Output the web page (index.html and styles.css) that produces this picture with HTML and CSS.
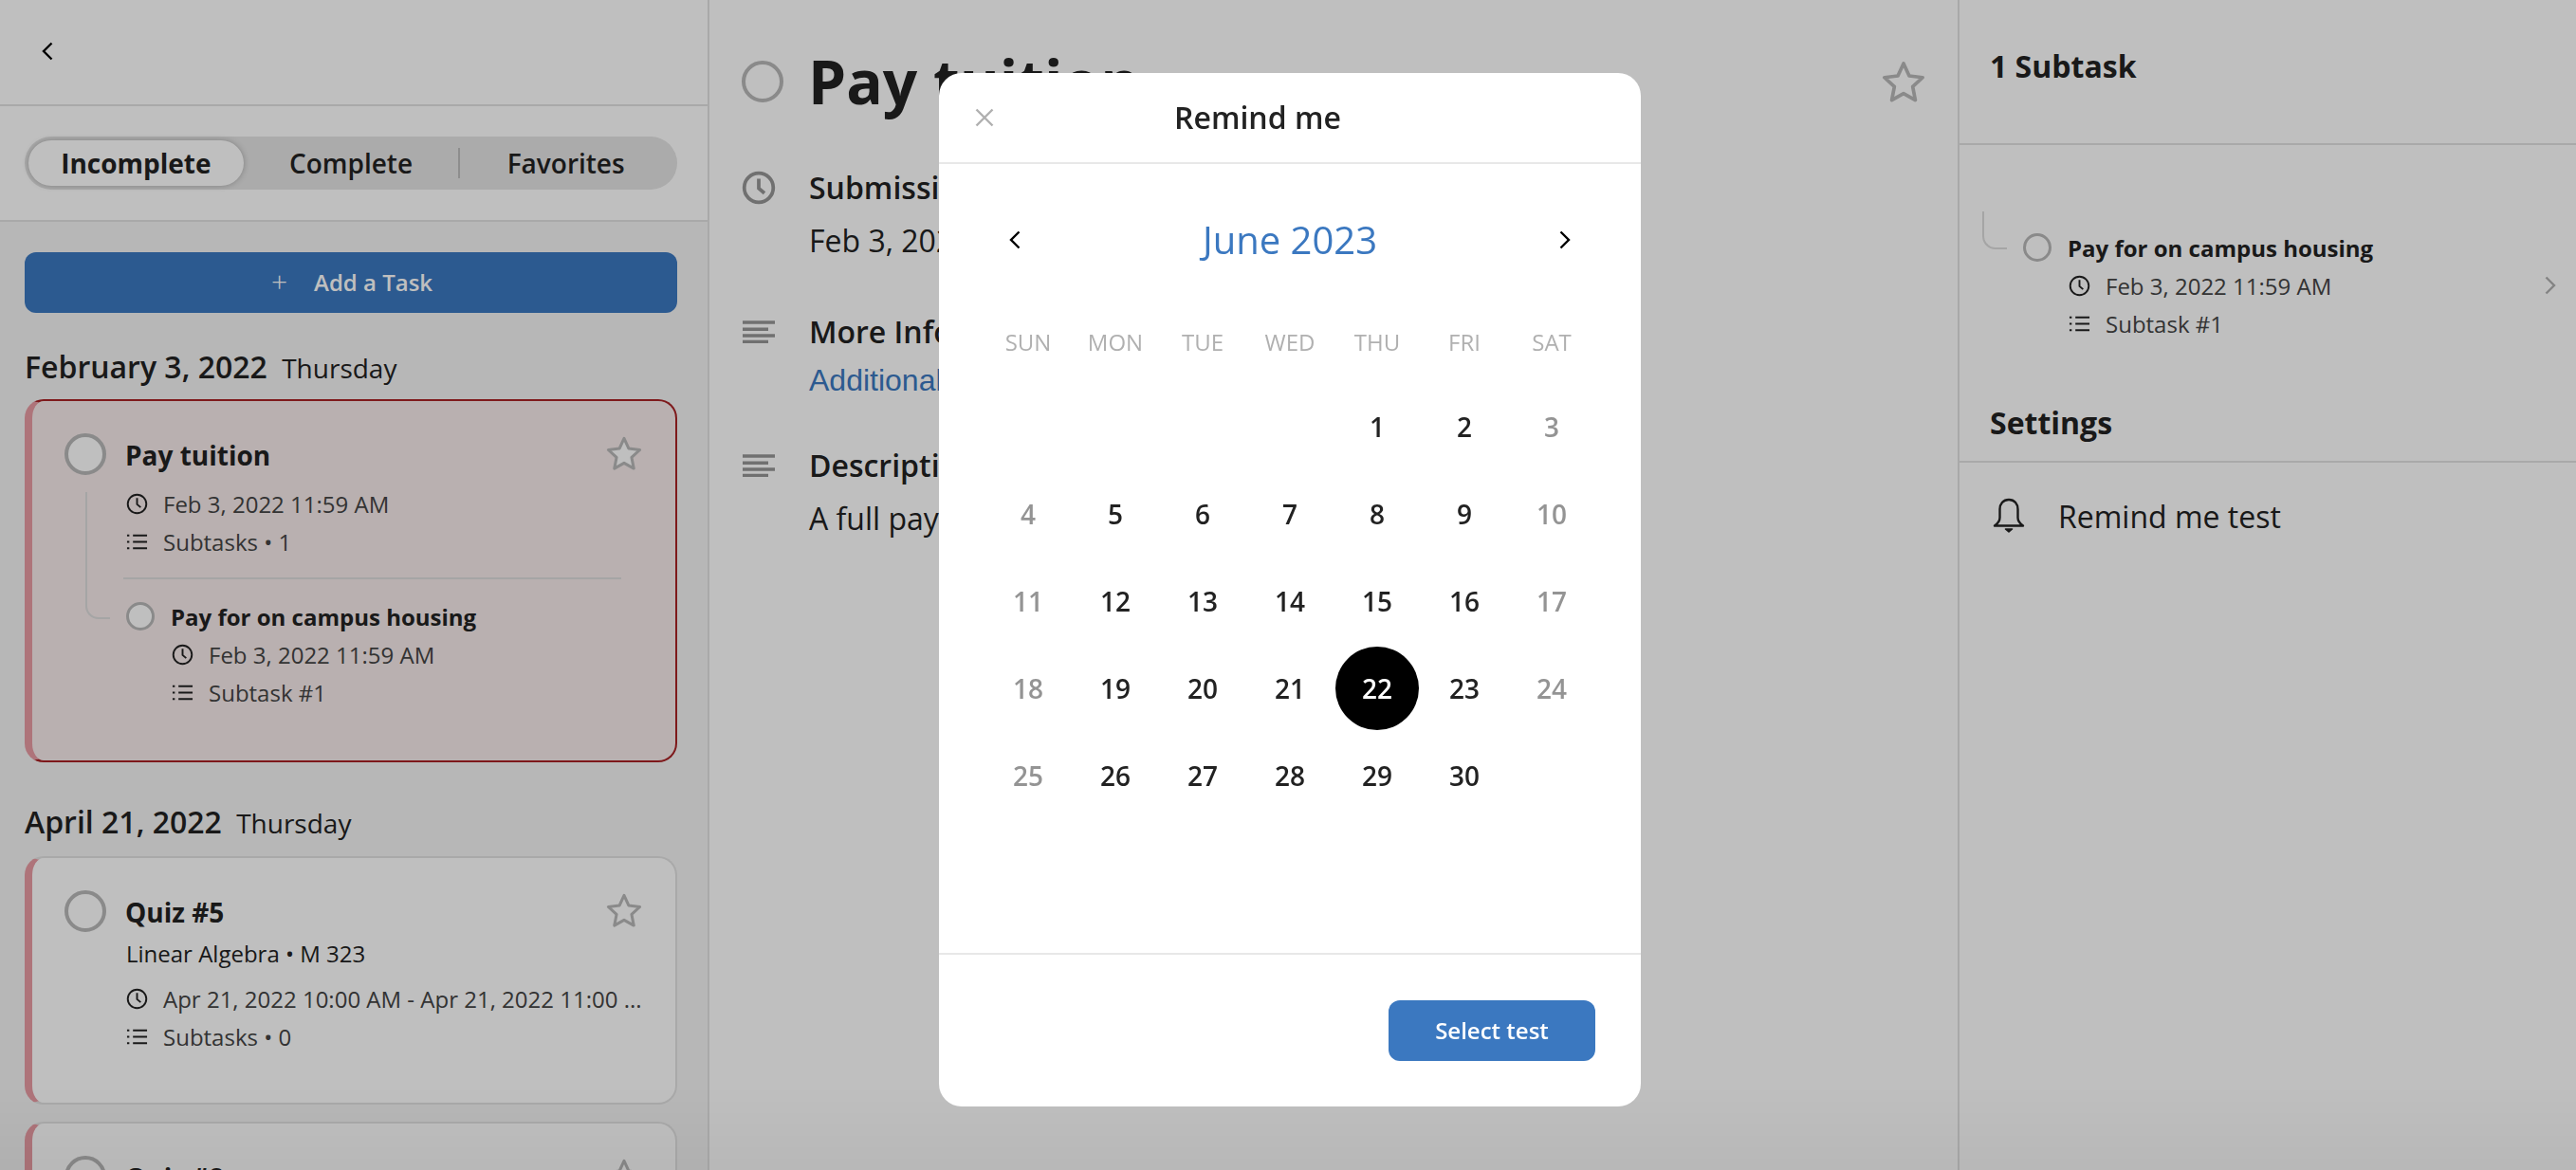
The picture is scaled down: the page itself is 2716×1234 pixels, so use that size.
FILE: index.html
```html
<!DOCTYPE html>
<html lang="en">
<head>
    <meta charset="UTF-8">
    <title>Remind me</title>
    <link rel="stylesheet" href="styles.css">
</head>
<body>
    <svg class="sprite" xmlns="http://www.w3.org/2000/svg">
        <symbol id="i-star" viewBox="0 0 40 38"><path d="M20 2.500l5.200 11.300 12.300 1.500-9.100 8.400 2.400 12.300L20 29.900 9.200 36l2.400-12.300-9.100-8.400 12.300-1.500z" stroke-linejoin="round"/></symbol>
        <symbol id="i-clock" viewBox="0 0 24 24"><circle cx="12" cy="12" r="10.200" fill="none"/><path d="M12 5.600V12.400l4 3.400" fill="none"/></symbol>
        <symbol id="i-list" viewBox="0 0 24 24"><path d="M7.500 5H23M7.500 12H23M7.500 19H23" fill="none"/><path d="M1 5h2.500M1 12h2.500M1 19h2.500" fill="none"/></symbol>
        <symbol id="i-lines" viewBox="0 0 34 24"><path d="M0 2h34M0 9.300h27M0 16h34M0 22.500h27" fill="none"/></symbol>
        <symbol id="i-bell" viewBox="0 0 34 38"><path d="M17 2c-6.200 0-9.500 4.700-9.500 10v9c0 3.500-2 6-5.500 8.500h30c-3.500-2.500-5.500-5-5.500-8.500v-9C26.500 6.700 23.200 2 17 2z" fill="none" stroke-width="2.400" stroke-linejoin="round"/><path d="M13.500 33l3.500 3 3.500-3z" stroke-width="1.600" stroke-linejoin="round"/></symbol>
    </svg>

    <div class="app">
        <aside class="sidebar">
            <div class="sidebar-top">
                <svg class="chevron chevron-back" viewBox="0 0 12 20"><path d="M10.500 1.500L2 10l8.500 8.500"/></svg>
            </div>
            <div class="filter-bar">
                <div class="segments">
                    <div class="segment segment-active">Incomplete</div>
                    <div class="segment">Complete</div>
                    <div class="segment segment-last">Favorites</div>
                </div>
            </div>
            <div class="task-list">
                <button class="add-task" type="button"><span class="add-plus">+</span>Add a Task</button>

                <section class="day-group">
                    <h2 class="day-title">February 3, 2022 <span class="day-name">Thursday</span></h2>
                    <article class="card card-active">
                        <div class="card-head">
                            <span class="check"></span>
                            <h3 class="card-title">Pay tuition</h3>
                            <svg class="star star-filled"><use href="#i-star"/></svg>
                        </div>
                        <div class="card-body">
                            <div class="meta"><svg class="meta-icon"><use href="#i-clock"/></svg><span class="meta-text">Feb 3, 2022 11:59 AM</span></div>
                            <div class="meta"><svg class="meta-icon"><use href="#i-list"/></svg><span class="meta-text">Subtasks • 1</span></div>
                        </div>
                        <div class="card-split"></div>
                        <div class="subtask subtask-card">
                            <div class="subtask-head"><span class="check check-small"></span><h4 class="subtask-title">Pay for on campus housing</h4></div>
                            <div class="subtask-body">
                                <div class="meta"><svg class="meta-icon"><use href="#i-clock"/></svg><span class="meta-text">Feb 3, 2022 11:59 AM</span></div>
                                <div class="meta"><svg class="meta-icon"><use href="#i-list"/></svg><span class="meta-text">Subtask #1</span></div>
                            </div>
                        </div>
                    </article>
                </section>

                <section class="day-group">
                    <h2 class="day-title">April 21, 2022 <span class="day-name">Thursday</span></h2>
                    <article class="card">
                        <div class="card-head">
                            <span class="check"></span>
                            <h3 class="card-title">Quiz #5</h3>
                            <svg class="star"><use href="#i-star"/></svg>
                        </div>
                        <div class="card-body">
                            <div class="course">Linear Algebra • M 323</div>
                            <div class="meta"><svg class="meta-icon"><use href="#i-clock"/></svg><span class="meta-text">Apr 21, 2022 10:00 AM - Apr 21, 2022 11:00 ...</span></div>
                            <div class="meta"><svg class="meta-icon"><use href="#i-list"/></svg><span class="meta-text">Subtasks • 0</span></div>
                        </div>
                    </article>
                    <article class="card">
                        <div class="card-head">
                            <span class="check"></span>
                            <h3 class="card-title">Quiz #8</h3>
                            <svg class="star"><use href="#i-star"/></svg>
                        </div>
                    </article>
                </section>
            </div>
        </aside>

        <main class="detail">
            <div class="detail-head">
                <span class="check"></span>
                <h1 class="detail-title">Pay tuition</h1>
                <svg class="star star-large"><use href="#i-star"/></svg>
            </div>
            <section class="info info-first">
                <svg class="info-icon info-clock"><use href="#i-clock"/></svg>
                <div>
                    <h3 class="info-label">Submission</h3>
                    <p class="info-value">Feb 3, 2022</p>
                </div>
            </section>
            <section class="info">
                <svg class="info-icon info-lines"><use href="#i-lines"/></svg>
                <div>
                    <h3 class="info-label">More Info</h3>
                    <a class="info-link">Additional Info</a>
                </div>
            </section>
            <section class="info">
                <svg class="info-icon info-lines"><use href="#i-lines"/></svg>
                <div>
                    <h3 class="info-label">Description</h3>
                    <p class="info-value">A full pay</p>
                </div>
            </section>
        </main>

        <aside class="side-info">
            <div class="side-head"><h2 class="side-title">1 Subtask</h2></div>
            <div class="subtask subtask-side">
                <div class="subtask-head"><span class="check check-small"></span><h4 class="subtask-title">Pay for on campus housing</h4></div>
                <div class="subtask-body">
                    <div class="meta"><svg class="meta-icon"><use href="#i-clock"/></svg><span class="meta-text">Feb 3, 2022 11:59 AM</span><svg class="chevron chevron-row" viewBox="0 0 12 20"><path d="M1.500 1.500L10 10l-8.500 8.500"/></svg></div>
                    <div class="meta"><svg class="meta-icon"><use href="#i-list"/></svg><span class="meta-text">Subtask #1</span></div>
                </div>
            </div>
            <h2 class="side-title settings-title">Settings</h2>
            <div class="setting">
                <svg class="bell"><use href="#i-bell"/></svg>
                <span>Remind me test</span>
            </div>
        </aside>
    </div>

    <div class="overlay">
        <div class="modal">
            <header class="modal-head">
                <svg class="close" viewBox="0 0 20 20"><path d="M1.500 1.500l17 17M18.500 1.500l-17 17"/></svg>
                <h2 class="modal-title">Remind me</h2>
            </header>
            <div class="modal-body">
                <div class="month-row">
                    <svg class="chevron" viewBox="0 0 12 20"><path d="M10.500 1.500L2 10l8.500 8.500"/></svg>
                    <div class="month-name">June 2023</div>
                    <svg class="chevron" viewBox="0 0 12 20"><path d="M1.500 1.500L10 10l-8.500 8.500"/></svg>
                </div>
                <div class="weekdays">
                    <span>SUN</span><span>MON</span><span>TUE</span><span>WED</span><span>THU</span><span>FRI</span><span>SAT</span>
                </div>
                <div class="days">
                    <span></span><span></span><span></span><span></span><span>1</span><span>2</span><span class="off">3</span>
                    <span class="off">4</span><span>5</span><span>6</span><span>7</span><span>8</span><span>9</span><span class="off">10</span>
                    <span class="off">11</span><span>12</span><span>13</span><span>14</span><span>15</span><span>16</span><span class="off">17</span>
                    <span class="off">18</span><span>19</span><span>20</span><span>21</span><span class="selected">22</span><span>23</span><span class="off">24</span>
                    <span class="off">25</span><span>26</span><span>27</span><span>28</span><span>29</span><span>30</span><span></span>
                </div>
            </div>
            <footer class="modal-foot">
                <button class="select-btn" type="button">Select test</button>
            </footer>
        </div>
    </div>
</body>
</html>
```

FILE: styles.css
```css
* {
    box-sizing: border-box;
}

html,
body {
    height: 100%;
}

body {
    margin: 0;
    overflow: hidden;
    font-family: "Open Sans", "Noto Sans", sans-serif;
    background-color: #fff;
    color: #222;
}

h1,
h2,
h3,
h4,
p {
    margin: 0;
}

.sprite {
    display: none;
}

.app {
    display: flex;
    height: 100vh;
}

/* left column */
.sidebar {
    width: 748px;
    flex-shrink: 0;
    border-right: 2px solid #e2e2e2;
    overflow: hidden;
}

.sidebar-top {
    height: 112px;
    padding: 44px 0 0 44px;
    border-bottom: 2px solid #e2e2e2;
}

.chevron {
    display: block;
    width: 12px;
    height: 20px;
    fill: none;
    stroke: #000;
    stroke-width: 2.400;
}

.filter-bar {
    height: 122px;
    padding: 32px 32px 0 26px;
    border-bottom: 2px solid #e2e2e2;
}

.segments {
    display: grid;
    grid-template-columns: repeat(3, 1fr);
    height: 56px;
    padding: 4px;
    border-radius: 28px;
    background-color: #e4e4e4;
}

.segment {
    position: relative;
    display: flex;
    align-items: center;
    justify-content: center;
    padding-bottom: 1px;
    font-size: 28px;
    font-weight: 600;
}

.segment-active {
    font-weight: 700;
    border-radius: 24px;
    background-color: #fff;
    box-shadow: 0 0 6px rgba(0, 0, 0, 0.25);
}

.segment-last::before {
    content: "";
    position: absolute;
    left: 0;
    top: 8px;
    bottom: 8px;
    width: 2px;
    background-color: #bcbcbc;
}

.task-list {
    height: calc(100vh - 234px);
    padding: 32px 32px 0 26px;
    background-color: #f4f4f4;
    overflow: hidden;
}

.add-task {
    display: flex;
    align-items: center;
    justify-content: center;
    width: 100%;
    height: 64px;
    padding: 0 0 2px 2px;
    border: none;
    border-radius: 12px;
    background-color: #3b78c0;
    color: #fff;
    font-family: inherit;
    font-size: 24px;
    font-weight: 600;
}

.add-plus {
    margin-right: 28px;
    font-size: 30px;
    font-weight: 300;
    line-height: 1;
}

.day-group {
    margin-top: 36px;
}

.day-group + .day-group {
    margin-top: 42px;
}

.day-title {
    margin-bottom: 14px;
    font-size: 32px;
    font-weight: 600;
    line-height: 42px;
}

.day-group:first-of-type .day-title {
    margin-bottom: 12px;
}

.day-name {
    margin-left: 7px;
    font-size: 28px;
    font-weight: 400;
}

.card {
    position: relative;
    margin-bottom: 18px;
    padding: 34px 35px 50px 34px;
    border: 2px solid #e2e2e2;
    border-left: 8px solid #e89ba3;
    border-radius: 20px;
    background-color: #fff;
}

.card-active {
    padding-bottom: 52px;
    border-color: #a82225;
    border-left-color: #e89ba3;
    background-color: #f7ebeb;
}

.card-active::before {
    content: "";
    position: absolute;
    left: 56px;
    top: 96px;
    height: 92px;
    width: 2px;
    background-color: #dcdcdc;
}

.card-head {
    display: flex;
    align-items: center;
    height: 44px;
}

.check {
    flex-shrink: 0;
    width: 44px;
    height: 44px;
    border: 4px solid #b8b8b8;
    border-radius: 50%;
    background-color: #fff;
}

.check-small {
    width: 30px;
    height: 30px;
    border-width: 3px;
}

.card-title {
    flex: 1;
    margin: 1px 0 0 20px;
    font-size: 28px;
    font-weight: 700;
}

.star {
    flex-shrink: 0;
    width: 38px;
    height: 36px;
    margin-bottom: 3px;
    fill: none;
    stroke: #b8b8b8;
    stroke-width: 3.200;
}

.star-filled {
    fill: #fff;
}

.card-body {
    padding-left: 65px;
    margin-top: 10px;
}

.course {
    margin: -7px 0 7px;
    font-size: 24px;
    line-height: 40px;
}

.meta {
    display: flex;
    align-items: center;
    height: 40px;
    font-size: 24px;
    color: #444;
}

.meta-icon {
    flex-shrink: 0;
    width: 23px;
    height: 23px;
    margin-right: 16px;
    stroke: #222;
    stroke-width: 2;
}

.meta-text {
    white-space: nowrap;
}

.card-split {
    height: 2px;
    margin: 18px 22px 0 62px;
    background-color: #dcdcdc;
}

.subtask {
    position: relative;
}

.subtask::before {
    content: "";
    position: absolute;
    width: 24px;
    border-left: 2px solid #dcdcdc;
    border-bottom: 2px solid #dcdcdc;
    border-bottom-left-radius: 14px;
}

.subtask-card {
    margin-top: 19px;
    padding-left: 65px;
}

.subtask-card::before {
    left: 22px;
    top: -19px;
    height: 40px;
}

.subtask-head {
    display: flex;
    align-items: center;
    height: 40px;
}

.subtask-title {
    margin-left: 17px;
    font-size: 24px;
    font-weight: 700;
}

.subtask-body {
    padding-left: 48px;
}

/* middle column */
.detail {
    width: 1318px;
    flex-shrink: 0;
    padding: 54px 34px 0;
    border-right: 2px solid #e2e2e2;
}

.detail-head {
    display: flex;
    align-items: center;
    height: 64px;
}

.detail-title {
    flex: 1;
    margin-left: 26px;
    font-size: 64px;
    font-weight: 700;
    line-height: 64px;
}

.star-large {
    width: 46px;
    height: 44px;
    margin-bottom: 0;
}

.info {
    display: flex;
    margin-top: 48px;
}

.info-first {
    margin-top: 56px;
}

.info-icon {
    flex-shrink: 0;
    width: 36px;
    margin-right: 35px;
    stroke: #969696;
}

.info-clock {
    height: 36px;
    margin-top: 6px;
    stroke-width: 2.500;
}

.info-lines {
    height: 24px;
    margin-top: 12px;
    stroke-width: 3.400;
}

.info-label {
    font-size: 32px;
    font-weight: 600;
    line-height: 48px;
}

.info-value {
    margin-top: 8px;
    font-size: 32px;
    line-height: 48px;
}

.info-link {
    display: block;
    margin: 7px 0 -3px;
    font-family: "Liberation Sans", Arial, sans-serif;
    font-size: 32px;
    line-height: 41px;
    color: #3b78c0;
}

/* right column */
.side-info {
    flex: 1;
    min-width: 0;
}

.side-head {
    height: 153px;
    padding: 48px 0 0 32px;
    border-bottom: 2px solid #e2e2e2;
}

.side-title {
    font-size: 32px;
    font-weight: 700;
    line-height: 44px;
}

.subtask-side {
    margin-top: 88px;
    padding: 0 21px 0 67px;
}

.subtask-side::before {
    left: 24px;
    top: -18px;
    height: 38px;
}

.chevron-row {
    margin-left: auto;
    stroke: #b0b0b0;
}

.settings-title {
    margin-top: 63px;
    padding: 0 0 18px 32px;
    border-bottom: 2px solid #e2e2e2;
}

.setting {
    display: flex;
    align-items: center;
    height: 48px;
    margin-top: 32px;
    padding-left: 35px;
    font-size: 32px;
}

.bell {
    width: 34px;
    height: 38px;
    margin-right: 35px;
    stroke: #222;
    fill: #222;
}

/* reminder dialog */
.overlay {
    position: fixed;
    inset: 0;
    display: flex;
    align-items: center;
    justify-content: center;
    padding: 10px 0 0 4px;
    background-color: rgba(0, 0, 0, 0.25);
    background-image: linear-gradient(to bottom, transparent calc(100% - 90px), rgba(0, 0, 0, 0.04));
}

.modal {
    display: flex;
    flex-direction: column;
    width: 740px;
    height: 1090px;
    border-radius: 24px;
    background-color: #fff;
}

.modal-head {
    display: flex;
    align-items: center;
    height: 96px;
    padding: 0 0 2px 38px;
    border-bottom: 2px solid #e8e8e8;
}

.close {
    width: 20px;
    height: 20px;
    margin-top: 2px;
    fill: none;
    stroke: #b0b0b0;
    stroke-width: 2.400;
}

.modal-title {
    margin-left: 190px;
    font-size: 32px;
    font-weight: 600;
}

.modal-body {
    flex: 1;
    padding: 49px 47px 0 48px;
}

.month-row {
    display: flex;
    align-items: center;
    justify-content: space-between;
    height: 60px;
    padding: 1px 27px 0 26px;
}

.month-name {
    margin-top: -1px;
    font-size: 40px;
    color: #3b78c0;
}

.weekdays {
    display: grid;
    grid-template-columns: repeat(7, 92px);
    margin-top: 59px;
    font-size: 24px;
    line-height: 40px;
    text-align: center;
    color: #b0b0b0;
}

.days {
    display: grid;
    grid-template-columns: repeat(7, 92px);
    grid-auto-rows: 92px;
    margin-top: 23px;
    font-size: 28px;
    font-weight: 600;
}

.days span {
    display: flex;
    align-items: center;
    justify-content: center;
}

.days .off {
    color: #949494;
}

.days .selected {
    width: 88px;
    height: 88px;
    margin: 2px;
    border-radius: 50%;
    background-color: #000;
    color: #fff;
}

.modal-foot {
    display: flex;
    justify-content: flex-end;
    height: 162px;
    padding: 48px 48px 0 0;
    border-top: 2px solid #e8e8e8;
}

.select-btn {
    width: 218px;
    height: 64px;
    padding: 0 0 1px;
    border: none;
    border-radius: 12px;
    background-color: #3b78c0;
    color: #fff;
    font-family: inherit;
    font-size: 24px;
    font-weight: 600;
}
```
